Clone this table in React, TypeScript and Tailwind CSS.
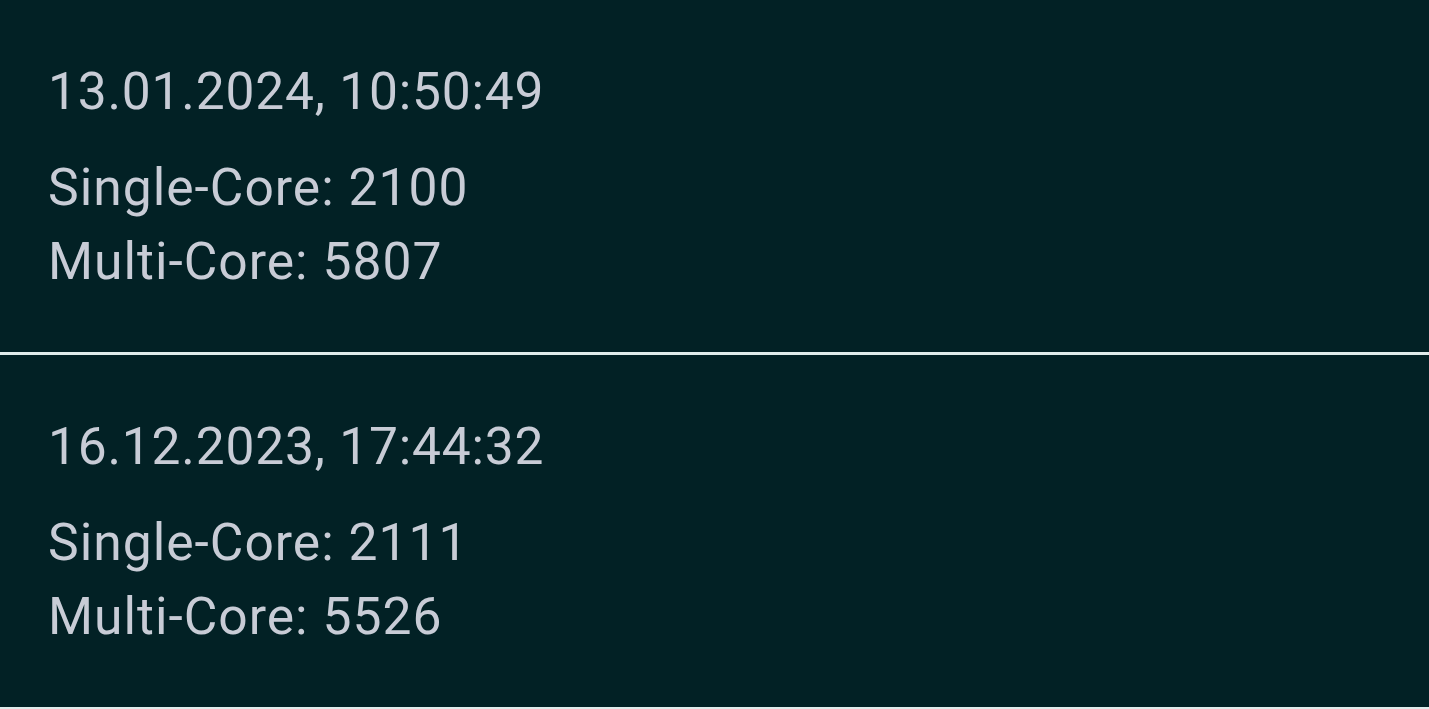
import React from "react";

const items = [
  { date: "13.01.2024, 10:50:49", single: 2100, multi: 5807 },
  { date: "16.12.2023, 17:44:32", single: 2111, multi: 5526 },
];

export default function App() {
  return (
    <div
      className="min-h-[709px] w-full bg-[#022125] text-[#c8ccd6]"
      style={{ fontFamily: "Roboto, 'Noto Sans', sans-serif" }}
    >
      {items.map((it) => (
        <div
          key={it.date}
          className="h-[355px] border-b-[3px] border-[#dfeceb] pl-[48px] pt-[60px]"
        >
          <div className="text-[51.5px] leading-[64px] tracking-[0.8px]">{it.date}</div>
          <div className="mt-[27px] text-[51.6px] leading-[74px] tracking-[1px]">
            <div>Single-Core: {it.single}</div>
            <div>Multi-Core: {it.multi}</div>
          </div>
        </div>
      ))}
    </div>
  );
}
